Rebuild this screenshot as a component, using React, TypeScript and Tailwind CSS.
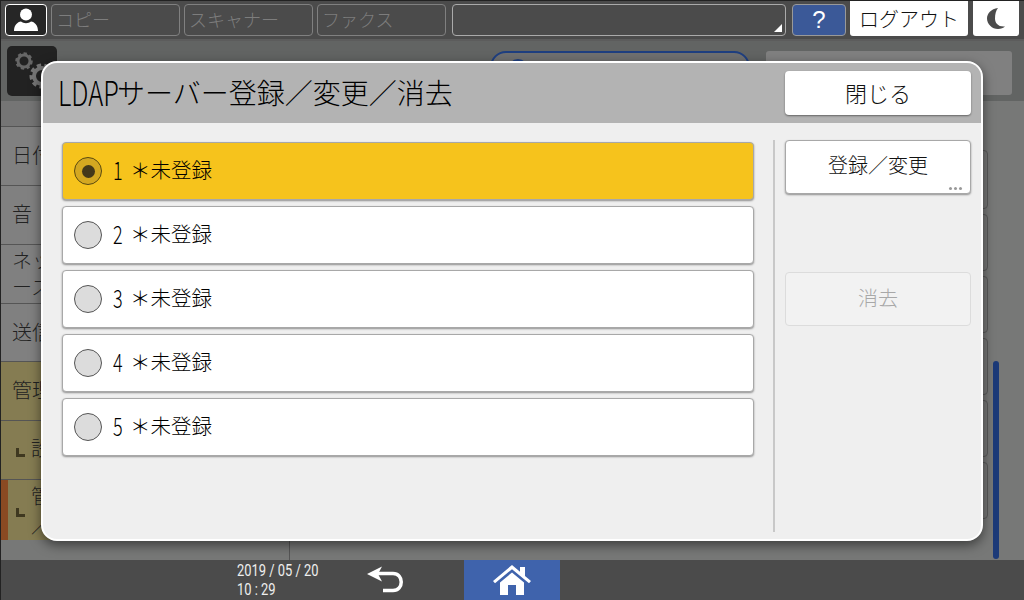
const font = { fontFamily: '"Noto Sans CJK JP", sans-serif' }

const tabs = ["コピー", "スキャナー", "ファクス"]

const sideRows = [
  { label: "日付", cls: "h-[59px] bg-[#808080]" },
  { label: "音", cls: "h-[59px] bg-[#808080]" },
  { label: "ネッ", second: "ース", cls: "h-[59px] bg-[#808080]" },
  { label: "送信", cls: "h-[58px] bg-[#808080]" },
  { label: "管理", cls: "h-[59px] bg-[#857c52]" },
]

function GearIcon() {
  return (
    <svg viewBox="0 0 50 50" className="w-[50px] h-[50px]">
      <rect width="50" height="50" rx="5" fill="#222" />
      <g fill="none" stroke="#666" strokeWidth="3.5" strokeDasharray="3 2.4">
        <circle cx="17" cy="15" r="7" />
      </g>
      <circle cx="17" cy="15" r="6" fill="none" stroke="#666" strokeWidth="3" />
      <g fill="none" stroke="#777" strokeWidth="5" strokeDasharray="4 3">
        <circle cx="35" cy="30" r="10" />
      </g>
      <circle cx="35" cy="30" r="8" fill="none" stroke="#777" strokeWidth="4" />
    </svg>
  )
}

function UserIcon() {
  return (
    <svg viewBox="0 0 28 24" className="w-[28px] h-[24px]" fill="#fff">
      <circle cx="14" cy="6.5" r="6" />
      <path d="M2 23c0-6 3.5-9 7-9.500 1.500 1.200 3 1.700 5 1.700s3.500-.5 5-1.700c3.500.5 7 3.500 7 9.500z" />
    </svg>
  )
}

function MoonIcon() {
  return (
    <svg viewBox="0 0 18 21" className="w-[18px] h-[21px]" fill="#4b4b4b">
      <path d="M11 0C4 1 0 5.500 0 10.500 0 16 5 21 11 21c3 0 5.500-1 7-2.500C11 19 8 15 8 10.500 8 6 9 2.500 11 0z" />
    </svg>
  )
}

function HomeIcon() {
  return (
    <svg viewBox="0 0 38 32" className="w-[38px] h-[32px]" fill="#fff">
      <path d="M0 17 19 1l8 6.700V3h5v9l6 5-2 2.200L19 5.200 2 19.200z" />
      <path d="M7 18.500 19 8.500l12 10V31H23V21h-8v10H7z" />
    </svg>
  )
}

function BackIcon() {
  return (
    <svg viewBox="0 0 38 30" className="w-[38px] h-[30px]">
      <path d="M1 9 16 1.500 12 9l4 7.500z" fill="#fff" />
      <path d="M11 8.500h16c11 0 11 17 0 17H17" fill="none" stroke="#fff" strokeWidth="3.500" />
    </svg>
  )
}

function Radio({ selected }: { selected: boolean }) {
  return (
    <span
      className={
        selected
          ? "w-[28px] h-[28px] rounded-full border border-[#5a4a10] bg-[#d4a821] flex items-center justify-center shrink-0"
          : "w-[28px] h-[28px] rounded-full border border-[#555] bg-[#dcdcdc] flex items-center justify-center shrink-0"
      }
    >
      {selected && <span className="w-[13px] h-[13px] rounded-full bg-[#43381a]" />}
    </span>
  )
}

function Row({ n, selected }: { n: number; selected: boolean }) {
  return (
    <div
      className={
        selected
          ? "h-[58px] rounded-[4px] border border-[#a8a8a8] bg-[#f6c31c] shadow-[0_1px_2px_rgba(0,0,0,0.4)] flex items-center pl-[11px] text-[#000]"
          : "h-[58px] rounded-[4px] border border-[#a8a8a8] bg-white shadow-[0_1px_2px_rgba(0,0,0,0.4)] flex items-center pl-[11px] text-[#000]"
      }
    >
      <Radio selected={selected} />
      <span className="ml-[11px] w-[12px] pb-[3px] text-[25px] font-light leading-none scale-x-[0.72] origin-left">{n}</span>
      <span className="ml-[5px] pb-[3px] text-[20.5px] font-light leading-none">＊未登録</span>
    </div>
  )
}

export default function App() {
  return (
    <div className="relative w-[1024px] h-[600px] overflow-hidden bg-[#777877] flex flex-col border-t border-l border-[#222]" style={font}>
      {/* top bar */}
      <div className="h-[40px] shrink-0 bg-[#4b4b4b] border-b-2 border-[#5c5c5c] flex items-start pt-[3px] pl-[4px]">
        <div className="w-[42px] h-[32px] rounded-[4px] border border-white bg-[#262626] flex items-center justify-center">
          <UserIcon />
        </div>
        <div className="flex gap-[4px] ml-[4px]">
          {tabs.map((t) => (
            <div key={t} className="w-[129px] h-[32px] rounded-[4px] border border-[#808080] pl-[4px] pb-[1px] flex items-center text-[18px] font-light text-[#7d7d7d]">
              {t}
            </div>
          ))}
        </div>
        <div className="relative w-[334px] h-[32px] ml-[6px] rounded-[4px] border border-[#aaa]">
          <span className="absolute right-[3px] bottom-[3px] w-0 h-0 border-l-[8px] border-b-[8px] border-l-transparent border-b-white" />
        </div>
        <div className="w-[54px] h-[32px] ml-[6px] rounded-[4px] border border-[#999] bg-[#3b5998] text-white text-[24px] font-medium flex items-center justify-center" style={{ fontFamily: '"Liberation Sans", sans-serif' }}>
          ?
        </div>
        <div className="w-[118px] h-[35px] -mt-[3px] ml-[4px] rounded-b-[3px] bg-white text-[#111] text-[20px] font-light flex items-center justify-center">
          ログアウト
        </div>
        <div className="w-[46px] h-[35px] -mt-[3px] ml-[5px] rounded-b-[3px] bg-white flex items-center justify-center">
          <MoonIcon />
        </div>
      </div>

      {/* second row behind the dialog */}
      <div className="h-[60px] shrink-0 bg-[#626463] flex items-start pt-[5px] pl-[6px]">
        <GearIcon />
        <div className="w-[260px] h-[44px] ml-[433px] mt-[5px] pl-[16px] pt-[6px] rounded-[16px] border-2 border-[#1f3f80] bg-[#707070]">
          <div className="w-[20px] h-[20px] rounded-full border-2 border-[#1f3f80]" />
        </div>
        <div className="w-[246px] h-[44px] ml-[16px] mt-[5px] rounded-[3px] bg-[#808080]" />
      </div>

      {/* body behind the dialog */}
      <div className="flex-1 flex min-h-0">
        <div className="w-[289px] border-r border-[#555] flex flex-col">
          <div className="h-[26px] border-b border-[#555] bg-[#757575]" />
          {sideRows.map((r) => (
            <div key={r.label} className={`${r.cls} border-b border-[#555] pl-[11px] pb-[3px] flex flex-col justify-center text-[20px] font-light leading-[27px] text-[#222]`}>
              <span>{r.label}</span>
              {r.second && <span>{r.second}</span>}
            </div>
          ))}
          <div className="h-[59px] bg-[#857c52] border-b border-[#555] pl-[15px] flex items-center gap-[6px] text-[20px] font-light text-[#222]">
            <span className="w-[9px] h-[9px] mt-[4px] border-l-[3px] border-b-[3px] border-[#3f3820]" />
            <span className="pb-[4px]">設</span>
          </div>
          <div className="h-[60px] bg-[#857c52] border-l-[7px] border-[#8a4a22] pl-[8px] flex items-center gap-[6px] text-[20px] font-light leading-[29px] text-[#222]">
            <span className="w-[9px] h-[9px] mt-[4px] border-l-[3px] border-b-[3px] border-[#3f3820]" />
            <div className="flex flex-col">
              <span>管</span>
              <span>／</span>
            </div>
          </div>
        </div>
        <div className="flex-1 relative">
          <div className="absolute right-[25px] top-[260px] bottom-[1px] w-[6px] rounded-full bg-[#1c3a78]" />
          <div className="absolute right-[36px] top-[49px] flex flex-col gap-[5px]">
            <div className="w-[14px] h-[59px] rounded-r-[4px] border border-[#595959]" />
            <div className="w-[14px] h-[57px] rounded-r-[4px] border border-[#595959]" />
            <div className="w-[14px] h-[57px] rounded-r-[4px] border border-[#595959]" />
            <div className="w-[14px] h-[57px] rounded-r-[4px] border border-[#595959]" />
            <div className="w-[14px] h-[57px] rounded-r-[4px] border border-[#595959]" />
            <div className="w-[14px] h-[57px] rounded-r-[4px] border border-[#595959]" />
          </div>
        </div>
      </div>

      {/* bottom bar */}
      <div className="h-[40px] shrink-0 bg-[#4b4b4b] flex items-stretch pl-[236px]">
        <div className="w-[120px] text-[#eee] text-[17px] leading-[19px] pt-[1px] scale-x-[0.76] origin-left whitespace-nowrap" style={{ fontFamily: "Roboto, sans-serif" }}>
          <div>2019 / 05 / 20</div>
          <div>10 : 29</div>
        </div>
        <div className="w-[60px] pl-[9px] flex items-center justify-start">
          <BackIcon />
        </div>
        <div className="w-[96px] ml-[47px] bg-[#3f63ac] flex items-center justify-center">
          <HomeIcon />
        </div>
      </div>

      {/* dialog */}
      <div className="absolute left-[40px] top-[60px] w-[942px] h-[480px] rounded-[16px] border-2 border-white bg-[#efefef] overflow-hidden shadow-[0_4px_12px_rgba(0,0,0,0.5)] flex flex-col">
        <div className="h-[60px] shrink-0 bg-[#b3b3b3] flex items-center justify-between pl-[15px] pr-[10px]">
          <span className="pb-[3px] text-[28px] leading-[40px] font-light text-[#000] whitespace-nowrap flex items-center">
            <span className="inline-block w-[59px] text-[34px] leading-[40px] scale-x-[0.75] origin-left">LDAP</span>サーバー登録／変更／消去
          </span>
          <div className="w-[186px] h-[44px] pb-[2px] rounded-[4px] bg-white shadow-[0_1px_2px_rgba(0,0,0,0.45)] flex items-center justify-center text-[22px] font-light text-[#111]">
            閉じる
          </div>
        </div>
        <div className="flex-1 flex pl-[19px] pr-[10px] pt-[17px] pb-[7px]">
          <div className="w-[692px] flex flex-col gap-[6px] pt-[2px]">
            {[1, 2, 3, 4, 5].map((n) => (
              <Row key={n} n={n} selected={n === 1} />
            ))}
          </div>
          <div className="w-[2px] ml-[19px] bg-[#c8c8c8]" />
          <div className="ml-[10px] w-[186px] flex flex-col gap-[78px]">
            <div className="relative h-[54px] rounded-[4px] border border-[#a8a8a8] bg-white shadow-[0_1px_2px_rgba(0,0,0,0.4)] flex items-center justify-center pb-[4px] text-[20px] font-light text-[#111]">
              登録／変更
              <span className="absolute right-[8px] bottom-[3px] flex gap-[2px]">
                <span className="w-[3px] h-[3px] rounded-full bg-[#999]" />
                <span className="w-[3px] h-[3px] rounded-full bg-[#999]" />
                <span className="w-[3px] h-[3px] rounded-full bg-[#999]" />
              </span>
            </div>
            <div className="h-[54px] pb-[3px] rounded-[4px] border border-[#dcdcdc] bg-[#f2f2f2] flex items-center justify-center text-[20px] font-light text-[#a8a8a8]">
              消去
            </div>
          </div>
        </div>
      </div>
    </div>
  )
}
